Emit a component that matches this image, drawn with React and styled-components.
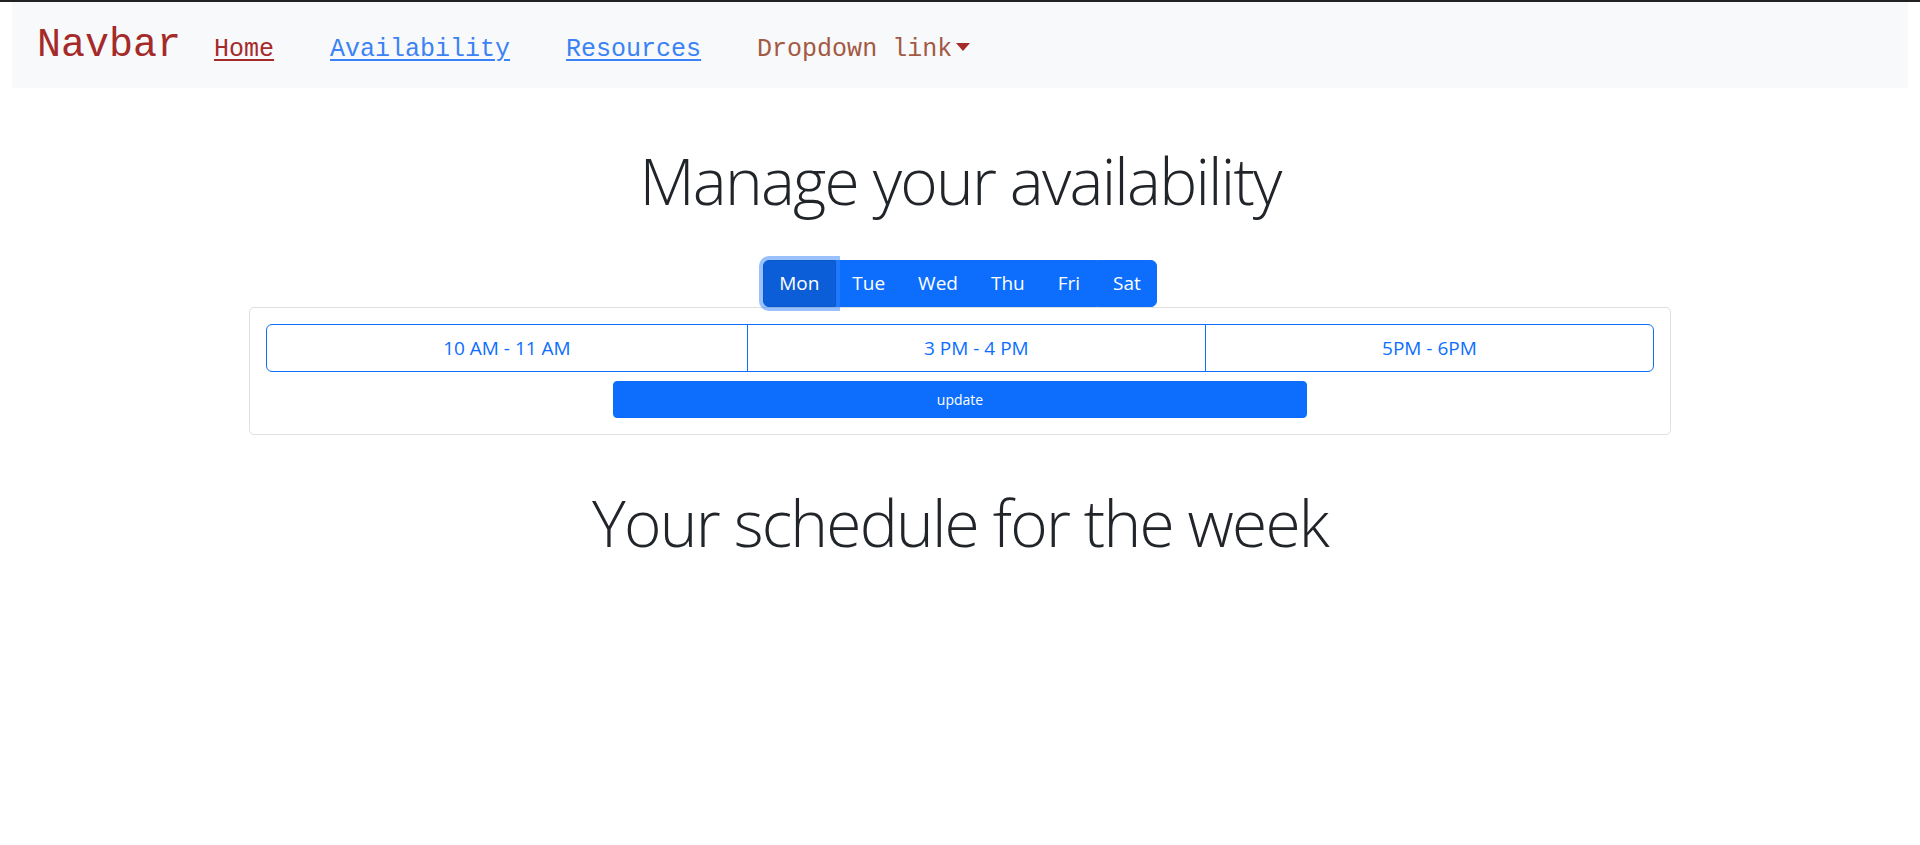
import React, { useState } from 'react';
import styled, { createGlobalStyle } from 'styled-components';

const GlobalStyle = createGlobalStyle`
  html, body {
    margin: 0;
    background: #fff;
  }
  body {
    border-top: 2px solid #222;
    font-family: "Open Sans", "Noto Sans", sans-serif;
    color: #212529;
  }
`;

const Page = styled.div`
  padding: 0 12px;
`;

const Navbar = styled.nav`
  display: flex;
  align-items: baseline;
  height: 86px;
  box-sizing: border-box;
  padding: 14px 25px 0;
  background: #f8f9fa;
  font-family: "Liberation Mono", "Courier New", monospace;
`;

const Brand = styled.a`
  font-size: 40px;
  line-height: 60px;
  color: #a52a2a;
  text-decoration: none;
  margin-right: 33px;
`;

const NavLinks = styled.div`
  display: flex;
  align-items: baseline;
  gap: 56px;
`;

const NavLink = styled.a`
  font-size: 25px;
  color: ${(p) => p.$color};
  text-decoration: ${(p) => (p.$plain ? 'none' : 'underline')};
  text-decoration-thickness: 2px;
  text-underline-offset: 3px;
  cursor: pointer;
`;

const Caret = styled.span`
  display: inline-block;
  margin-left: 4px;
  vertical-align: 5px;
  border-top: 8px solid #a52a2a;
  border-left: 7px solid transparent;
  border-right: 7px solid transparent;
`;

const Heading = styled.h1`
  margin: ${(p) => p.$top}px 0 0;
  text-align: center;
  font-size: 64px;
  font-weight: 300;
  line-height: 1.2;
  letter-spacing: -1.8px;
  color: #212529;
`;

const DayGroup = styled.div`
  display: flex;
  justify-content: center;
  margin-top: ${(p) => p.$top}px;
`;

const DayButton = styled.button`
  position: relative;
  font-family: inherit;
  font-size: 19px;
  line-height: 1.5;
  padding: 6px 15.5px;
  height: 47px;
  color: #fff;
  border: 1px solid ${(p) => (p.$active ? '#0a58ca' : '#0d6efd')};
  background: ${(p) => (p.$active ? '#0b5ed7' : '#0d6efd')};
  box-shadow: ${(p) => (p.$active ? '0 0 0 4px rgba(49, 132, 253, 0.5)' : 'none')};
  z-index: ${(p) => (p.$active ? 1 : 0)};
  border-radius: 0;
  cursor: pointer;
  &:first-child {
    border-radius: 6px 0 0 6px;
  }
  &:last-child {
    border-radius: 0 6px 6px 0;
  }
`;

const Card = styled.div`
  width: 75%;
  margin: 0 auto;
  box-sizing: border-box;
  padding: 16px;
  border: 1px solid #dfdfdf;
  border-radius: 5px;
`;

const SlotGroup = styled.div`
  display: flex;
`;

const SlotButton = styled.button`
  flex: 1 1 auto;
  font-family: inherit;
  font-size: 19px;
  line-height: 1.5;
  height: 48px;
  padding: 0 16px;
  color: #0d6efd;
  background: #fff;
  border: 1px solid #0d6efd;
  border-radius: 0;
  cursor: pointer;
  & + & {
    margin-left: -1px;
  }
  &:first-child {
    border-radius: 6px 0 0 6px;
  }
  &:last-child {
    border-radius: 0 6px 6px 0;
  }
`;

const UpdateButton = styled.button`
  display: block;
  width: 50%;
  height: 37px;
  margin: 9px auto 0;
  font-family: inherit;
  font-size: 14px;
  color: #fff;
  background: #0d6efd;
  border: 1px solid #0d6efd;
  border-radius: 4px;
  cursor: pointer;
`;

const days = ['Mon', 'Tue', 'Wed', 'Thu', 'Fri', 'Sat'];
const slots = ['10 AM - 11 AM', '3 PM - 4 PM', '5PM - 6PM'];

export default function App() {
  const [day, setDay] = useState('Mon');

  return (
    <Page>
      <GlobalStyle />
      <Navbar>
        <Brand>Navbar</Brand>
        <NavLinks>
          <NavLink $color="#a52a2a">Home</NavLink>
          <NavLink $color="#3b82f6">Availability</NavLink>
          <NavLink $color="#3b82f6">Resources</NavLink>
          <NavLink $color="#a35a44" $plain>
            Dropdown link<Caret />
          </NavLink>
        </NavLinks>
      </Navbar>

      <Heading $top={55}>Manage your availability</Heading>

      <DayGroup $top={40}>
        {days.map((d) => (
          <DayButton key={d} $active={d === day} onClick={() => setDay(d)}>
            {d}
          </DayButton>
        ))}
      </DayGroup>

      <Card>
        <SlotGroup>
          {slots.map((s) => (
            <SlotButton key={s}>{s}</SlotButton>
          ))}
        </SlotGroup>
        <UpdateButton>update</UpdateButton>
      </Card>

      <Heading $top={50}>Your schedule for the week</Heading>
    </Page>
  );
}
